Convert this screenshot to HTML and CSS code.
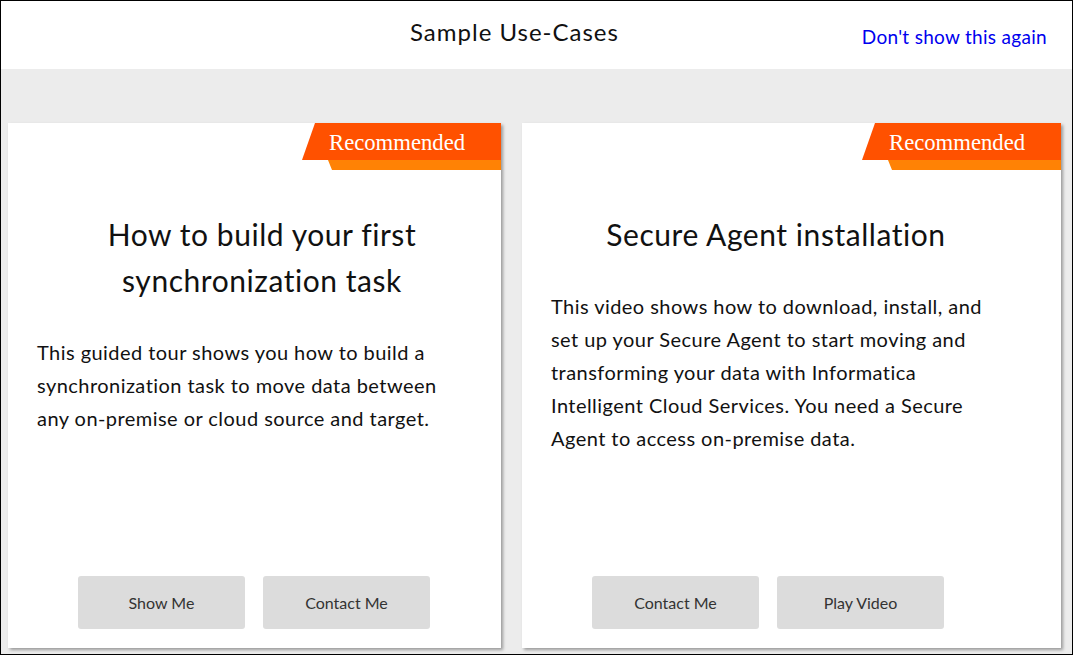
FILE: index.html
```html
<!DOCTYPE html>
<html>
<head>
<meta charset="utf-8">
<link rel="stylesheet" href="styles.css">
</head>
<body>
<div class="frame">
  <header class="header">
    <h1 class="header-title">Sample Use-Cases</h1>
    <a class="header-link" href="#">Don't show this again</a>
  </header>
  <main class="cards">
    <section class="card card-left">
      <div class="ribbon"><span class="ribbon-text">Recommended</span></div>
      <h2 class="card-title">How to build your first synchronization task</h2>
      <p class="card-text">This guided tour shows you how to build a synchronization task to move data between any on-premise or cloud source and target.</p>
      <div class="card-actions">
        <button class="btn">Show Me</button>
        <button class="btn">Contact Me</button>
      </div>
    </section>
    <section class="card card-right">
      <div class="ribbon"><span class="ribbon-text">Recommended</span></div>
      <h2 class="card-title">Secure Agent installation</h2>
      <p class="card-text">This video shows how to download, install, and set up your Secure Agent to start moving and transforming your data with Informatica Intelligent Cloud Services. You need a Secure Agent to access on-premise data.</p>
      <div class="card-actions">
        <button class="btn">Contact Me</button>
        <button class="btn">Play Video</button>
      </div>
    </section>
  </main>
</div>
</body>
</html>
```
FILE: styles.css
```css
* { box-sizing: border-box; }
html, body { margin: 0; padding: 0; }
body {
  font-family: "Lato", "Open Sans", sans-serif;
  color: #111;
  background: #fff;
}
.frame {
  width: 1073px;
  height: 655px;
  border: 1px solid #000;
  display: flex;
  flex-direction: column;
  overflow: hidden;
  background: #ececec;
}
.header {
  height: 68px;
  background: #fff;
  display: flex;
  align-items: center;
  padding: 0 25px 0 409px;
  flex: none;
}
.header-title {
  margin: 0;
  font-size: 24px;
  font-weight: 400;
  letter-spacing: 1px;
  position: relative;
  top: -4px;
}
.header-link {
  margin-left: auto;
  color: #0000ee;
  text-decoration: none;
  font-size: 19px;
  letter-spacing: 0.3px;
  position: relative;
  top: 1px;
}
.cards {
  flex: 1;
  display: flex;
  gap: 21px;
  padding: 54px 0 6px 7px;
}
.card {
  position: relative;
  background: #fff;
  box-shadow: 2px 2px 3px rgba(0,0,0,0.35);
  display: flex;
  flex-direction: column;
  padding: 88px 29px 19px 29px;
}
.card-left { width: 493px; }
.card-right { width: 539px; }
.ribbon {
  position: absolute;
  top: 0;
  right: 0;
  width: 199px;
  height: 47px;
  z-index: 0;
}
.ribbon::before {
  content: "";
  position: absolute;
  left: 0;
  top: 0;
  right: 0;
  height: 37px;
  background: #ff5100;
  clip-path: polygon(13px 0, 100% 0, 100% 100%, 0 100%);
  z-index: -1;
}
.ribbon::after {
  content: "";
  position: absolute;
  left: 26px;
  right: 0;
  top: 37px;
  height: 10px;
  background: #ff8205;
  clip-path: polygon(0 0, 100% 0, 100% 100%, 4px 100%);
  z-index: -1;
}
.ribbon-text {
  display: block;
  color: #fff;
  font-family: "Liberation Serif", "Times New Roman", serif;
  font-size: 22.7px;
  line-height: 39px;
  padding-left: 27px;
}
.card-title {
  margin: 0 0 33px;
  width: 450px;
  font-size: 30px;
  font-weight: 400;
  line-height: 46px;
  letter-spacing: 0.55px;
  text-align: center;
}
.card-text {
  margin: 0;
  max-width: 440px;
  font-size: 20px;
  line-height: 33px;
  letter-spacing: 0.45px;
}
.card-actions {
  margin-top: auto;
  display: flex;
  gap: 18px;
  padding-left: 41px;
}
.btn {
  width: 167px;
  height: 53px;
  border: none;
  border-radius: 3px;
  background: #dcdcdc;
  color: #333;
  font-family: inherit;
  font-size: 16px;
}
```
